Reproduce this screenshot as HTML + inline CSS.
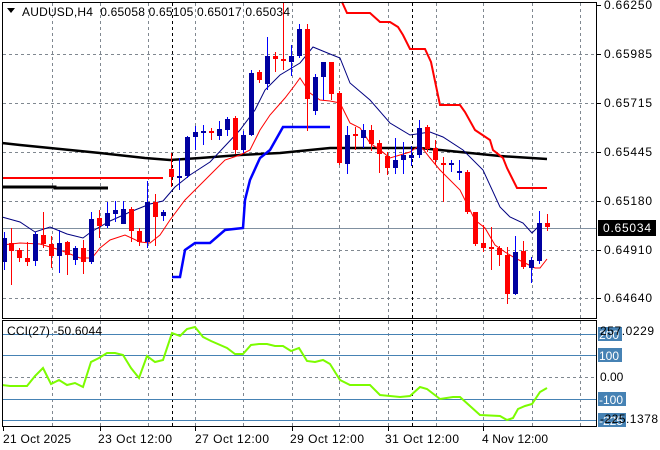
<!DOCTYPE html><html><head><style>body{margin:0;background:#fff}svg{display:block}text{font-family:"Liberation Sans","DejaVu Sans",sans-serif;font-size:12px;fill:#000}</style></head><body>
<svg width="660" height="450" viewBox="0 0 660 450" xmlns="http://www.w3.org/2000/svg">
<rect width="660" height="450" fill="#fff"/>
<g stroke="#808890" stroke-dasharray="3,3" stroke-width="1">
<path d="M52.5 3V318M100.5 3V318M148.5 3V318M195.5 3V318M243.5 3V318M292.5 3V318M339.5 3V318M388.5 3V318M436.5 3V318M483.5 3V318M532.5 3V318M580.5 3V318"/>
<path d="M3 54.5H596M3 103.5H596M3 152.5H596M3 201.5H596M3 250.5H596M3 298.5H596"/>
<path d="M52.5 321V426M100.5 321V426M148.5 321V426M195.5 321V426M243.5 321V426M292.5 321V426M339.5 321V426M388.5 321V426M436.5 321V426M483.5 321V426M532.5 321V426M580.5 321V426M3 377.5H596"/>
</g>
<g stroke="#000" stroke-dasharray="3,3"><path d="M172.5 3V426M412.5 3V426"/></g>
<path d="M3 228.5H596" stroke="#8090a0"/>
<polyline fill="none" stroke="#000" stroke-width="2.5" points="2,143 20,145 50,148 100,153 145,158 170,160 200,158 240,155 280,153 330,148 380,148 420,148 460,152 500,156 547,159"/>
<path d="M2 187H55V188H108" fill="none" stroke="#000" stroke-width="3"/>
<path d="M2 178H163" stroke="#f00" stroke-width="2"/>
<polyline fill="none" stroke="#0000ff" stroke-width="2.5" points="172,277 180,277 185,250 195,243 210,243 225,230 243,228 245,200 250,180 260,158 270,150 283,127 330,127"/>
<polyline fill="none" stroke="#f00" stroke-width="2" points="342,2 347,13 370,13 380,22 390,22 398,27 403,35 410,49 425,49 431,62 440,105 460,105 465,112 475,130 490,140 493,150 503,158 507,168 517,188 547,188"/>
<polyline fill="none" stroke="#000080" stroke-width="1" points="2,217 20,222 35,232 50,227 67,234 83,238 91,232 110,221 130,212 150,204 163,201 175,187 190,175 210,162 240,130 255,110 265,90 280,75 300,63 313,47 330,54 340,58 350,83 370,100 390,123 410,135 430,132 443,137 463,150 483,170 500,207 510,217 523,223 532,233 540,225"/>
<polyline fill="none" stroke="#f00" stroke-width="1" points="2,245 20,243 40,244 60,250 80,258 92,258 100,248 110,240 125,235 140,242 150,243 160,235 170,220 185,200 200,185 215,170 225,160 240,155 250,150 260,130 270,115 285,98 295,85 300,78 310,93 320,100 330,101 340,103 350,123 360,128 370,143 380,150 390,158 400,155 410,152 420,145 430,158 440,170 460,190 475,220 485,228 495,245 505,252 515,258 525,263 535,268 540,268 547,259"/>
<path stroke="#0000ff" stroke-width="1" d="M4.5 232V270M35.5 232V266M59.5 230V273M75.5 246V265M91.5 212V264M107.5 202V228M115.5 201V222M123.5 201V224M147.5 181V248M163.5 210V221M179.5 158V190M187.5 136V178M195.5 126V150M203.5 125V145M219.5 121V140M227.5 117V136M243.5 131V153M251.5 70V136M267.5 37V90M291.5 45V76M299.5 24V58M315.5 74V115M323.5 62V100M347.5 126V174M363.5 124V148M395.5 138V174M403.5 142V174M411.5 146V166M419.5 120V158M451.5 160V172M459.5 160V180M515.5 236V295M531.5 257V283M539.5 211V264"/>
<path stroke="#0000a0" stroke-width="5" d="M4.5 238V262M35.5 234V261M59.5 243V256M75.5 248V260M91.5 219V262M107.5 213V226M115.5 210V214M123.5 209V224M147.5 202V242M163.5 212V216M179.5 176V178M187.5 137V176M195.5 132V137M203.5 131V133M219.5 129V136M227.5 119V130M243.5 135V150M251.5 73V135M267.5 56V84M291.5 56V62M299.5 29V56M315.5 77V111M323.5 62V77M347.5 135V164M363.5 130V138M395.5 160V168M403.5 155V160M411.5 155V158M419.5 128V155M451.5 163V165M459.5 171V173M515.5 252V294M531.5 260V268M539.5 223V261"/>
<path stroke="#f00" stroke-width="1" d="M11.5 228V285M19.5 248V262M27.5 242V266M43.5 212V248M51.5 236V268M67.5 241V275M83.5 240V274M99.5 210V238M131.5 207V242M139.5 228V246M155.5 194V246M171.5 153V187M211.5 128V140M235.5 116V154M259.5 70V83M275.5 52V72M283.5 2V70M307.5 24V131M331.5 62V100M339.5 91V165M355.5 127V150M371.5 125V151M379.5 140V173M387.5 152V175M427.5 125V152M435.5 140V165M443.5 157V202M467.5 170V214M475.5 212V246M483.5 225V252M491.5 227V270M499.5 246V266M507.5 247V304M523.5 241V269M547.5 214V231"/>
<path stroke="#f00" stroke-width="5" d="M11.5 243V251M19.5 250V258M27.5 258V262M43.5 235V244M51.5 244V256M67.5 242V255M83.5 248V262M99.5 218V226M131.5 209V231M139.5 231V242M155.5 202V217M171.5 169V177M211.5 131V133M235.5 118V150M259.5 72V80M275.5 56V59M283.5 59V61M307.5 29V99M331.5 62V94M339.5 93V163M355.5 134V136M371.5 130V144M379.5 143V154M387.5 156V168M427.5 127V149M435.5 148V160M443.5 163V165M467.5 172V212M475.5 212V244M483.5 243V248M491.5 247V249M499.5 248V255M507.5 255V294M523.5 251V267M547.5 223V227"/>
<path stroke="#4682b4" d="M3 334.5H596M3 355.5H596M3 399.5H596M3 420.5H596"/>
<polyline fill="none" stroke="#7cfc00" stroke-width="2" points="2,385 10,386 27,386 35,376 43,368 51,384 59,380 67,385 75,383 83,387 91,362 99,358 107,353 115,353 123,355 131,368 139,378 147,356 155,362 163,360 172,333 180,336 187,329 195,327 203,337 211,341 227,348 235,354 243,354 251,345 259,344 267,344 275,346 283,346 291,351 299,348 307,361 315,362 323,360 330,364 340,380 350,385 370,385 380,395 390,396 400,397 410,396 420,387 427,389 440,399 453,397 460,397 480,415 500,416 507,420 513,418 518,409 525,406 532,404 540,392 547,388"/>
<rect x="2.5" y="2.5" width="594" height="316" fill="none" stroke="#000"/>
<rect x="2.5" y="320.5" width="594" height="106" fill="none" stroke="#000"/>
<path stroke="#000" d="M597 5.5h4M597 54.5h4M597 103.5h4M597 152.5h4M597 201.5h4M597 250.5h4M597 298.5h4M3.5 427v4M100.5 427v4M195.5 427v4M292.5 427v4M388.5 427v4M483.5 427v4"/>
<path d="M7 8h8l-4 5z" fill="#000"/>
<text x="22" y="16" textLength="268" lengthAdjust="spacing" xml:space="preserve">AUDUSD,H4  0.65058 0.65105 0.65017 0.65034</text>
<text x="604" y="9" textLength="48">0.66250</text>
<text x="604" y="58" textLength="48">0.65985</text>
<text x="604" y="107" textLength="48">0.65715</text>
<text x="604" y="156" textLength="48">0.65445</text>
<text x="604" y="205" textLength="48">0.65180</text>
<text x="604" y="254" textLength="48">0.64910</text>
<text x="604" y="302" textLength="48">0.64640</text>
<rect x="598" y="220" width="58" height="16" fill="#000"/>
<text x="603" y="232" textLength="48" style="fill:#fff">0.65034</text>
<text x="7" y="335" textLength="95">CCI(27) -50.6044</text>
<g fill="#4682b4"><rect x="598" y="327" width="24" height="14"/><rect x="598" y="348" width="24" height="14"/><rect x="598" y="392" width="28" height="14"/><rect x="598" y="413" width="28" height="14"/></g>
<text x="599" y="339" style="fill:#fff">200</text><text x="599" y="360" style="fill:#fff">100</text><text x="599" y="404" style="fill:#fff">-100</text><text x="599" y="425" style="fill:#fff">-225</text>
<text x="600" y="335" textLength="54">257.0229</text>
<text x="600" y="381">0.00</text>
<text x="600" y="423" textLength="58">-225.1378</text>
<text x="3" y="443" textLength="68">21 Oct 2025</text>
<text x="98" y="443" textLength="74">23 Oct 12:00</text>
<text x="195" y="443" textLength="74">27 Oct 12:00</text>
<text x="290" y="443" textLength="74">29 Oct 12:00</text>
<text x="385" y="443" textLength="74">31 Oct 12:00</text>
<text x="482" y="443" textLength="66">4 Nov 12:00</text>
</svg></body></html>
